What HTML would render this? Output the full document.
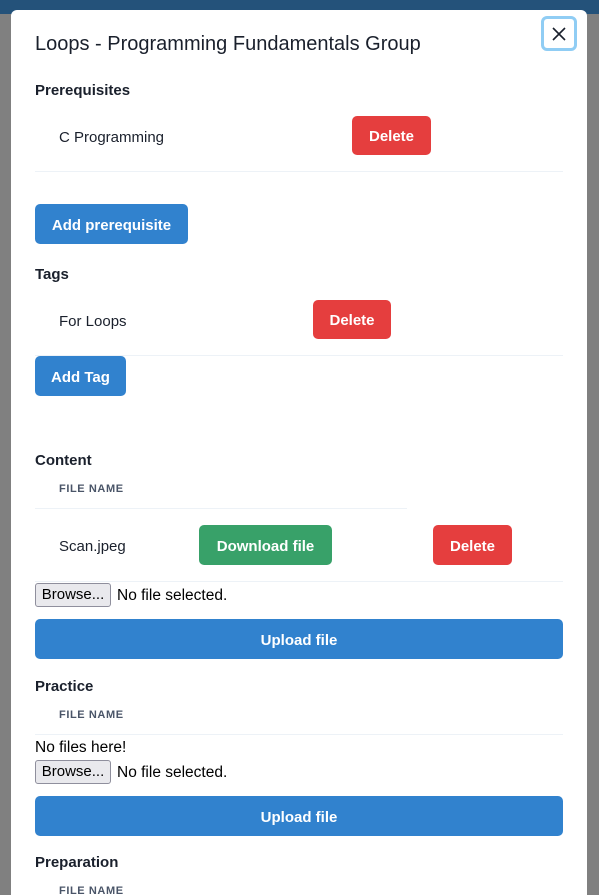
<!DOCTYPE html>
<html style="overflow:hidden"><head><meta charset="utf-8"><style>
*{box-sizing:border-box;margin:0;padding:0}
html,body{width:599px;height:895px;overflow:hidden}
body{background:#808080;font-family:"Liberation Sans",sans-serif;color:#1a202c;position:relative}
.top{position:absolute;left:0;top:0;width:599px;height:14px;background:#24527a}
.modal{position:absolute;left:11px;top:10px;width:576px;height:885px;background:#fff;border-radius:6px 6px 0 0}
.a{position:absolute;white-space:nowrap}
.t{font-size:15px;line-height:18px}
.h{font-size:15px;font-weight:bold;line-height:18px}
.btn{position:absolute;border-radius:5px;color:#fff;font-weight:bold;font-size:15px;display:flex;align-items:center;justify-content:center;padding-top:2px}
.red{background:#e53e3e}.blue{background:#3182ce}.green{background:#38a169}
.line{position:absolute;height:1px;background:#edf2f7}
.fn{font-size:11px;font-weight:bold;color:#4a5568;letter-spacing:0.6px;line-height:13px}
.br{position:absolute;width:76px;height:24px;background:#e9e9ed;border:1px solid #8f8f9d;border-radius:3px;font-size:15px;line-height:22px;text-align:center;color:#000}
.nf{font-size:15.5px;color:#000;line-height:18px}
</style></head><body>
<div class="top"></div>
<div class="modal"></div>
<div class="a" style="left:35px;top:32px;font-size:20px;line-height:24px">Loops - Programming Fundamentals Group</div>
<div class="a" style="left:541px;top:16px;width:36px;height:35px;border:3px solid #90cdf4;border-radius:6px;display:flex;align-items:center;justify-content:center">
<svg width="14" height="14" viewBox="0 0 14 14"><path d="M1 1L13 13M13 1L1 13" stroke="#1a202c" stroke-width="1.6"/></svg></div>
<div class="a h" style="left:35px;top:82px">Prerequisites</div>
<div class="a t" style="left:59px;top:129px">C Programming</div>
<div class="btn red" style="left:352px;top:116px;width:79px;height:39px">Delete</div>
<div class="line" style="left:35px;top:171px;width:528px"></div>
<div class="btn blue" style="left:35px;top:204px;width:153px;height:40px">Add prerequisite</div>
<div class="a h" style="left:35px;top:266px">Tags</div>
<div class="a t" style="left:59px;top:313px">For Loops</div>
<div class="btn red" style="left:313px;top:300px;width:78px;height:39px">Delete</div>
<div class="line" style="left:35px;top:355px;width:528px"></div>
<div class="btn blue" style="left:35px;top:356px;width:91px;height:40px">Add Tag</div>
<div class="a h" style="left:35px;top:452px">Content</div>
<div class="a fn" style="left:59px;top:483px">FILE NAME</div>
<div class="line" style="left:35px;top:508px;width:372px"></div>
<div class="a t" style="left:59px;top:538px">Scan.jpeg</div>
<div class="btn green" style="left:199px;top:525px;width:133px;height:40px">Download file</div>
<div class="btn red" style="left:433px;top:525px;width:79px;height:40px">Delete</div>
<div class="line" style="left:35px;top:581px;width:528px"></div>
<div class="br" style="left:35px;top:583px">Browse...</div>
<div class="a nf" style="left:117px;top:587px">No file selected.</div>
<div class="btn blue" style="left:35px;top:619px;width:528px;height:40px">Upload file</div>
<div class="a h" style="left:35px;top:678px">Practice</div>
<div class="a fn" style="left:59px;top:709px">FILE NAME</div>
<div class="line" style="left:35px;top:734px;width:528px"></div>
<div class="a nf" style="left:35px;top:739px">No files here!</div>
<div class="br" style="left:35px;top:760px">Browse...</div>
<div class="a nf" style="left:117px;top:764px">No file selected.</div>
<div class="btn blue" style="left:35px;top:796px;width:528px;height:40px">Upload file</div>
<div class="a h" style="left:35px;top:854px">Preparation</div>
<div class="a fn" style="left:59px;top:885px">FILE NAME</div>
</body></html>
